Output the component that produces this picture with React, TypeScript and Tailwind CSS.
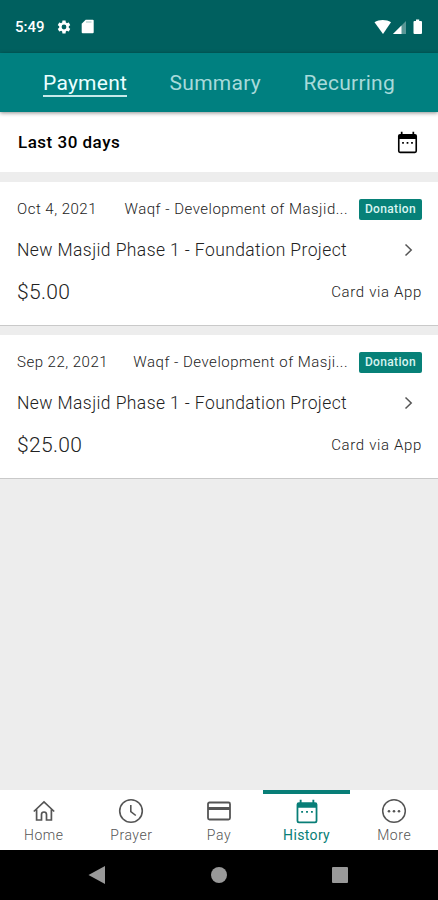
import React from 'react';

type Payment = { date: string; fund: string; project: string; amount: string; method: string };

const payments: Payment[] = [
  { date: 'Oct 4, 2021', fund: 'Waqf - Development of Masjid...', project: 'New Masjid Phase 1 - Foundation Project', amount: '$5.00', method: 'Card via App' },
  { date: 'Sep 22, 2021', fund: 'Waqf - Development of Masji...', project: 'New Masjid Phase 1 - Foundation Project', amount: '$25.00', method: 'Card via App' },
];

function GearIcon() {
  return (
    <svg className="h-4 w-4" viewBox="0 0 24 24" fill="white">
      <path d="M19.14 12.94c.04-.3.06-.61.06-.94 0-.32-.02-.64-.07-.94l2.03-1.58c.18-.14.23-.41.12-.61l-1.92-3.32c-.12-.22-.37-.29-.59-.22l-2.39.96c-.5-.38-1.03-.7-1.62-.94l-.36-2.54c-.04-.24-.24-.41-.48-.41h-3.84c-.24 0-.43.17-.47.41l-.36 2.54c-.59.24-1.13.57-1.62.94l-2.39-.96c-.22-.08-.47 0-.59.22L2.74 8.87c-.12.21-.08.47.12.61l2.03 1.58c-.05.3-.09.63-.09.94s.02.64.07.94l-2.03 1.58c-.18.14-.23.41-.12.61l1.92 3.32c.12.22.37.29.59.22l2.39-.96c.5.38 1.03.7 1.62.94l.36 2.54c.05.24.24.41.48.41h3.84c.24 0 .44-.17.47-.41l.36-2.54c.59-.24 1.13-.56 1.62-.94l2.39.96c.22.08.47 0 .59-.22l1.92-3.32c.12-.22.07-.47-.12-.61zM12 15.6A3.6 3.6 0 1 1 12 8.4a3.6 3.6 0 0 1 0 7.2z" />
    </svg>
  );
}

function CalendarIcon({ className }: { className: string }) {
  return (
    <svg className={className} viewBox="0 0 22 24" fill="currentColor">
      <path fillRule="evenodd" d="M4 .8h1.800V3h10.400V.800H18V3h.800A2.200 2.200 0 0 1 21 5.200V21A2.200 2.200 0 0 1 18.800 23.200H3.200A2.200 2.200 0 0 1 1 21V5.200A2.200 2.200 0 0 1 3.200 3H4zM2.700 8.300V20.800a.7.7 0 0 0 .7.700H18.600a.7.7 0 0 0 .7-.700V8.300z" />
      <path d="M5.400 11.400h1.800v1.800h-1.800zM10.100 11.400h1.800v1.800h-1.800zM14.800 11.400h1.800v1.800h-1.800z" />
    </svg>
  );
}

function HomeIcon() {
  return (
    <svg className="h-6 w-6" viewBox="0 0 24 24" fill="none" stroke="currentColor" strokeWidth="1.7">
      <path d="M1.800 12.500 12 3l10.200 9.500M4.600 10.500V21H9.500v-5.500a2.500 2.500 0 0 1 5 0V21h4.900V10.500" />
    </svg>
  );
}

function ClockIcon() {
  return (
    <svg className="h-[26px] w-[26px]" viewBox="0 0 26 26" fill="none" stroke="currentColor" strokeWidth="1.600">
      <circle cx="13" cy="13" r="11.300" />
      <path d="M12.800 7v6.500l5 4" />
    </svg>
  );
}

function CardIcon() {
  return (
    <svg className="h-6 w-[26px]" viewBox="0 0 26 24" fill="none" stroke="currentColor">
      <rect x="2" y="3.500" width="22" height="17" rx="1.500" strokeWidth="1.800" />
      <path d="M2 9.500h22" strokeWidth="3" />
    </svg>
  );
}

function MoreIcon() {
  return (
    <svg className="h-[26px] w-[26px]" viewBox="0 0 26 26" fill="none" stroke="currentColor" strokeWidth="1.500">
      <circle cx="13" cy="13" r="11.300" />
      <g fill="currentColor" stroke="none">
        <circle cx="8" cy="13.200" r="1.300" />
        <circle cx="13" cy="13.200" r="1.300" />
        <circle cx="18" cy="13.200" r="1.300" />
      </g>
    </svg>
  );
}

function StatusBar() {
  return (
    <div className="flex h-[53px] shrink-0 items-center bg-[#00605f] pl-[15px] pr-3.5">
      <span className="w-[41px] text-[15px] font-medium leading-5 text-white">5:49</span>
      <GearIcon />
      <svg className="ml-[9px] h-[15px] w-[13px]" viewBox="0 0 13 15" fill="white">
        <path d="M4.700.700h7a1 1 0 0 1 1 1v11.600a1 1 0 0 1-1 1H1.700a1 1 0 0 1-1-1V4.700z" />
        <path d="M5 3h5.500" stroke="#8bb5b4" strokeWidth=".8" />
      </svg>
      <svg className="ml-auto h-4 w-[50px]" viewBox="0 0 50 16" fill="white">
        <path d="M.500 3.200C5 .200 12.500.200 17 3.200L9 15z" />
        <path d="M19 15 32 2v13z" opacity=".35" />
        <path d="m19 15 8.500-8.500V15z" />
        <path d="M42 .500h3.200V2h1.800a1 1 0 0 1 1 1v11a1 1 0 0 1-1 1h-6.500a1 1 0 0 1-1-1V3a1 1 0 0 1 1-1H42z" />
      </svg>
    </div>
  );
}

function Tabs() {
  return (
    <nav className="z-10 flex h-[59px] shrink-0 justify-between bg-[#008080] pl-[43px] pr-[43px] pt-[17px] text-[21px] tracking-[0.25px] text-[#a8dada] shadow-[0_1px_4px_rgba(0,0,0,0.45)]">
      <span className="h-[27px] border-b-2 border-[#c5eaea] leading-[26px] text-[#eaffff]">Payment</span>
      <span className="leading-[26px]">Summary</span>
      <span className="leading-[26px]">Recurring</span>
    </nav>
  );
}

function PaymentCard({ payment }: { payment: Payment }) {
  return (
    <article className="flex h-36 shrink-0 flex-col border-b border-[#c9c9c9] bg-white pl-[17px] pr-4 font-light text-[#222]">
      <div className="mt-4 flex h-[22px] items-center text-[15px] tracking-[0.5px]">
        <span>{payment.date}</span>
        <span className="ml-auto mr-[11px] whitespace-nowrap">{payment.fund}</span>
        <span className="flex h-[21px] w-[63px] items-center justify-center rounded-[2px] bg-[#078178] text-[12px] font-medium tracking-[0.35px] text-[#d9f5f1]">Donation</span>
      </div>
      <div className="mt-[18px] flex h-6 items-center justify-between text-[17.5px] tracking-[0.4px]">
        <span className="whitespace-nowrap">{payment.project}</span>
        <svg className="mr-[9px] h-3.5 w-[9px]" viewBox="0 0 9 14" fill="none" stroke="#555" strokeWidth="1.500">
          <path d="m1.500 1.500 5.700 5.500-5.700 5.500" />
        </svg>
      </div>
      <div className="mt-[18px] flex h-6 items-center justify-between">
        <span className="pt-0.5 text-[21px] tracking-[0.35px]">{payment.amount}</span>
        <span className="text-[15px] tracking-[0.65px]">{payment.method}</span>
      </div>
    </article>
  );
}

function BottomNav() {
  const items = [
    { label: 'Home', icon: <HomeIcon /> },
    { label: 'Prayer', icon: <ClockIcon /> },
    { label: 'Pay', icon: <CardIcon /> },
    { label: 'History', icon: <CalendarIcon className="h-[25px] w-6" />, active: true },
    { label: 'More', icon: <MoreIcon /> },
  ];
  return (
    <nav className="grid h-[60px] shrink-0 grid-cols-5 bg-white">
      {items.map((item) => (
        <div
          key={item.label}
          className={`flex flex-col items-center border-t-4 text-[14px] ${item.active ? 'border-[#087e77] text-[#087e77]' : 'border-transparent text-[#555]'}`}
        >
          <span className="mt-1 flex h-[26px] items-center">{item.icon}</span>
          <span className={`mt-0.5 leading-[18px] ${item.active ? 'font-normal tracking-[0.35px]' : 'font-light tracking-[0.55px]'}`}>{item.label}</span>
        </div>
      ))}
    </nav>
  );
}

export default function App() {
  return (
    <div className="flex h-[900px] w-[438px] flex-col overflow-hidden bg-[#ededed] font-['Roboto',sans-serif]">
      <StatusBar />
      <Tabs />
      <header className="flex h-[60px] shrink-0 items-center justify-between bg-white pl-[18px] pr-5 text-black">
        <h1 className="pt-0.5 text-[17px] font-medium tracking-[0.5px]">Last 30 days</h1>
        <CalendarIcon className="h-[23px] w-[21px]" />
      </header>
      <main className="flex flex-1 flex-col gap-[9px] pt-2.5">
        {payments.map((payment) => (
          <PaymentCard key={payment.date} payment={payment} />
        ))}
      </main>
      <BottomNav />
      <footer className="flex h-[50px] shrink-0 items-center bg-black pl-[88px]">
        <svg className="h-[18px] w-[17px]" viewBox="0 0 17 18" fill="#999">
          <path d="M.500 9 17 0v18z" />
        </svg>
        <span className="ml-[106px] h-4 w-4 rounded-full bg-[#999]" />
        <span className="ml-[105px] h-4 w-4 rounded-[1px] bg-[#999]" />
      </footer>
    </div>
  );
}
